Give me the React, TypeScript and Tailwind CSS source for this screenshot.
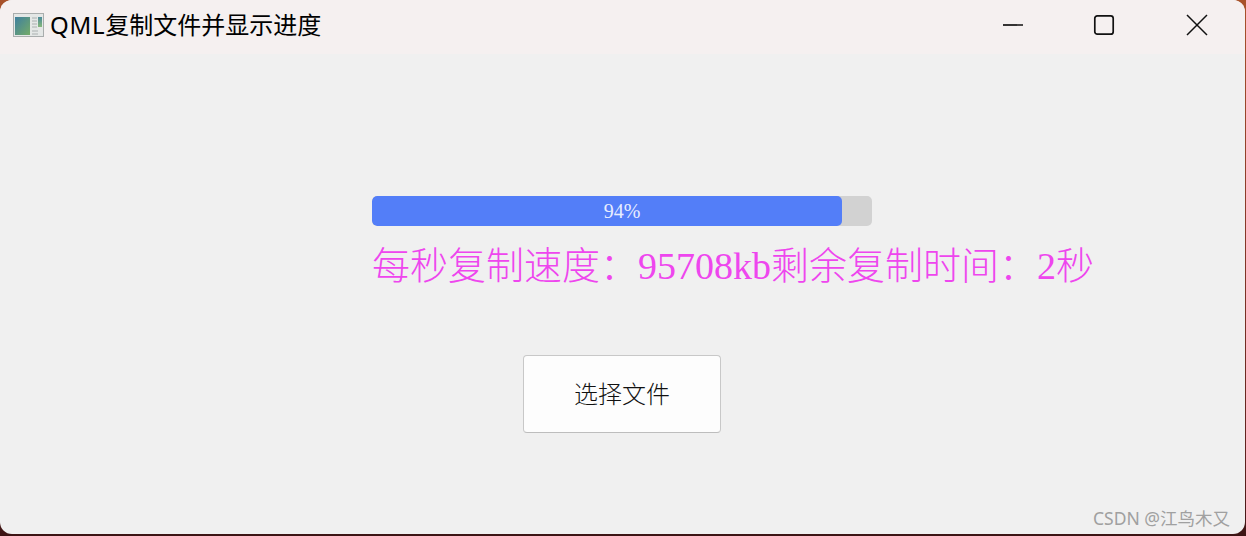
export default function App() {
  const cjk = { fontFamily: '"Liberation Serif", "Noto Sans CJK SC", serif' };
  return (
    <div className="h-[536px] w-[1246px] overflow-hidden bg-[linear-gradient(180deg,#a8522a_0%,#8a3a28_40%,#5a1f1c_90%,#3c1414_100%)]">
      <div className="relative flex h-[534px] w-[1245px] flex-col overflow-hidden rounded-[12px] bg-[#f0f0f0]">
        <div className="flex h-[54px] shrink-0 items-start bg-[#f5f0f0] pl-[13px] pt-[12px]">
          <svg width="32" height="26" viewBox="0 0 32 26" className="shrink-0">
            <defs>
              <linearGradient id="g" x1="0" y1="0" x2="1" y2="1">
                <stop offset="0" stopColor="#3f7f9f" />
                <stop offset="1" stopColor="#74ab68" />
              </linearGradient>
              <linearGradient id="h" x1="0" y1="0" x2="0" y2="1">
                <stop offset="0" stopColor="#4a8a9a" />
                <stop offset="1" stopColor="#86b87a" />
              </linearGradient>
            </defs>
            <rect x="0.5" y="1.5" width="30" height="23" fill="#e4e7e6" stroke="#a9adad" />
            <rect x="2" y="5" width="15" height="18" fill="url(#g)" />
            <rect x="25" y="5" width="4" height="10" fill="url(#h)" />
            <path d="M19 6h5M19 9h5M19 12h5M19 15h5M19 19h6M19 22h6" stroke="#aab0b0" strokeWidth="1" />
          </svg>
          <span
            className="ml-[5px] mt-[1px] text-[24px] leading-none text-black"
            style={{ fontFamily: '"Noto Sans", "Noto Sans CJK SC", sans-serif' }}
          >
            <span className="tracking-[0.7px]">QML</span>复制文件并显示进度
          </span>
          <div className="ml-auto flex items-center pr-[37px] pt-[2px]">
            <svg width="22" height="22" viewBox="0 0 22 22" fill="none" stroke="#111" strokeWidth="1.7">
              <path d="M1 11h20" />
            </svg>
            <svg width="22" height="22" viewBox="0 0 22 22" fill="none" stroke="#111" strokeWidth="1.7" className="ml-[69px]">
              <rect x="1.8" y="1.8" width="18.4" height="18.4" rx="2.5" />
            </svg>
            <svg width="22" height="22" viewBox="0 0 22 22" fill="none" stroke="#111" strokeWidth="1.5" className="ml-[71px]">
              <path d="M1 1l20 20M21 1L1 21" />
            </svg>
          </div>
        </div>

        <div className="flex flex-1 flex-col items-start pl-[372px] pt-[142px] font-light" style={cjk}>
          <div className="h-[30px] w-[500px] overflow-hidden rounded-[5px] bg-[#d2d2d2]">
            <div className="flex h-full w-[470px] items-center rounded-[5px] bg-[#537ef8]">
              <span className="w-[500px] shrink-0 text-center text-[20px] leading-none text-[#e8edff]">94%</span>
            </div>
          </div>
          <div className="mt-[17px] whitespace-nowrap text-[38px] leading-[46px] text-[#ee46ee]">
            每秒复制速度：95708kb剩余复制时间：2秒
          </div>
          <button className="ml-[151px] mt-[66px] flex h-[78px] w-[198px] items-center justify-center rounded-[4px] border border-[#c8c8c8] border-b-[#bdbdbd] bg-[#fdfdfd] pt-[2px] text-[24px] leading-none text-[#111]">
            选择文件
          </button>
        </div>

        <span
          className="absolute bottom-[7px] right-[15px] text-[17.5px] leading-none text-[#a0a0a0]"
          style={{ fontFamily: '"Noto Sans", "Noto Sans CJK SC", sans-serif' }}
        >
          CSDN @江鸟木又
        </span>
      </div>
    </div>
  );
}
